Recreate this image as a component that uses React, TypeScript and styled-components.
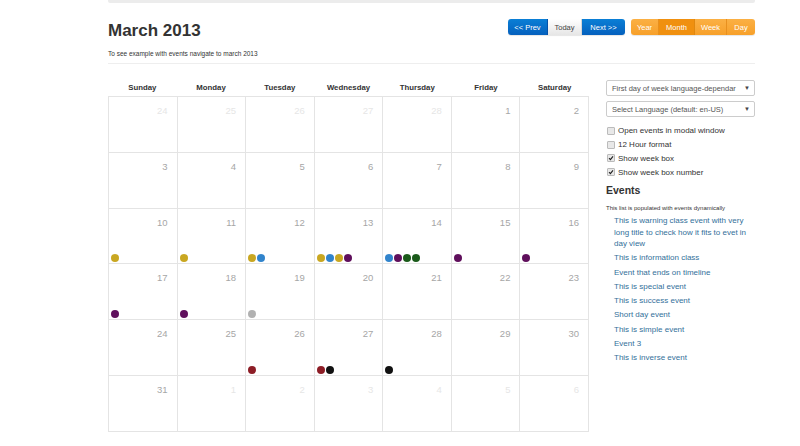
import React from 'react';
import styled, { createGlobalStyle } from 'styled-components';

const GlobalStyle = createGlobalStyle`
  html, body {
    margin: 0;
    padding: 0;
    background: #fff;
    font-family: "Liberation Sans", Arial, sans-serif;
    color: #333;
  }
`;

const Page = styled.div`
  width: 647px;
  margin-left: 108px;
`;

const TopStrip = styled.div`
  height: 3px;
  background: #ececec;
  border-radius: 0 0 2px 2px;
`;

const Header = styled.div`
  display: flex;
  justify-content: space-between;
  align-items: flex-start;
  padding-top: 16px;
  height: 44px;
  border-bottom: 1px solid #eee;
`;

const TitleBlock = styled.div`
  display: flex;
  flex-direction: column;
`;

const Title = styled.h1`
  margin: 0;
  margin-top: 2px;
  font-size: 17px;
  line-height: 20px;
  font-weight: bold;
  color: #333;
`;

const Caption = styled.p`
  margin: 9px 0 0 0;
  font-size: 6.5px;
  color: #333;
`;

const Toolbar = styled.div`
  display: flex;
  gap: 6px;
`;

const BtnGroup = styled.div`
  display: flex;
  border-radius: 3px;
  overflow: hidden;
  height: 16px;
  box-shadow: 0 1px 1px rgba(0, 0, 0, 0.1);
`;

type Tone = 'primary' | 'default' | 'warning' | 'warningActive';

const tones: Record<Tone, string> = {
  primary: 'background: linear-gradient(#0a7fd6, #0560bd); color: #fff; border-color: #0551a8;',
  default: 'background: linear-gradient(#fff, #e6e6e6); color: #444; border-color: #d6d6d6;',
  warning: 'background: linear-gradient(#fbb044, #f7a02a); color: #fff; border-color: #e8901f;',
  warningActive: 'background: #f0900f; color: #fff; border-color: #e08810;',
};

const Btn = styled.div<{ $w: number; $tone: Tone }>`
  width: ${(p) => p.$w}px;
  height: 16px;
  display: flex;
  align-items: center;
  justify-content: center;
  font-size: 7.5px;
  box-sizing: border-box;
  border-right: 1px solid;
  ${(p) => tones[p.$tone]}
  &:last-child {
    border-right: none;
  }
`;

const Body = styled.div`
  display: flex;
  gap: 17px;
  padding-top: 16px;
`;

const Calendar = styled.div`
  width: 481px;
  flex: none;
`;

const WeekHead = styled.div`
  display: grid;
  grid-template-columns: repeat(7, 1fr);
  height: 16px;
`;

const WeekDay = styled.div`
  text-align: center;
  font-size: 7.8px;
  font-weight: bold;
  color: #333;
  line-height: 16px;
`;

const Grid = styled.div`
  display: grid;
  grid-template-columns: repeat(7, 1fr);
  grid-auto-rows: 55.8px;
  border-top: 1px solid #e4e4e4;
  border-left: 1px solid #e4e4e4;
`;

const Cell = styled.div`
  border-right: 1px solid #e4e4e4;
  border-bottom: 1px solid #e4e4e4;
  display: flex;
  flex-direction: column;
  box-sizing: border-box;
  padding: 7px 9px 1px 2px;
`;

const DayNum = styled.div<{ $muted: boolean }>`
  text-align: right;
  font-size: 9.5px;
  line-height: 14px;
  color: ${(p) => (p.$muted ? '#e6e6e6' : '#a6a6a6')};
`;

const Dots = styled.div`
  margin-top: auto;
  display: flex;
  gap: 1px;
`;

const Dot = styled.span<{ $c: string }>`
  width: 8px;
  height: 8px;
  border-radius: 50%;
  background: ${(p) => p.$c};
`;

const Side = styled.div`
  width: 149px;
  flex: none;
  display: flex;
  flex-direction: column;
`;

const Select = styled.div`
  height: 16px;
  box-sizing: border-box;
  border: 1px solid #ccc;
  border-radius: 2px;
  display: flex;
  align-items: center;
  justify-content: space-between;
  padding: 0 4px 0 5px;
  font-size: 7.5px;
  color: #555;
  margin-bottom: 5px;
  white-space: nowrap;
  overflow: hidden;
`;

const Arrow = styled.span`
  font-size: 6px;
  color: #444;
`;

const CheckGroup = styled.div`
  padding-top: 2px;
`;

const CheckRow = styled.label`
  display: flex;
  align-items: center;
  gap: 3px;
  height: 13.8px;
  font-size: 8px;
  color: #333;
  padding-left: 1px;
`;

const Box = styled.span`
  width: 6px;
  height: 6px;
  border: 1px solid #bbb;
  background: #e8e8e8;
  border-radius: 1px;
  display: flex;
  align-items: center;
  justify-content: center;
`;

const EventsTitle = styled.h3`
  margin: 4px 0 0 0;
  font-size: 10.5px;
  line-height: 14px;
  font-weight: bold;
  color: #333;
`;

const EventsCaption = styled.p`
  margin: 8px 0 4px 0;
  font-size: 6px;
  color: #333;
`;

const EventList = styled.ul`
  list-style: none;
  margin: 0;
  padding: 0 0 0 8px;
`;

const EventItem = styled.li`
  font-size: 8px;
  line-height: 11.4px;
  margin-bottom: 2.9px;
  color: #33709a;
`;

const C = {
  y: '#c9a721',
  b: '#3184cc',
  p: '#5f0f5c',
  g: '#1a5a1a',
  s: '#b1b1b1',
  r: '#8d1d26',
  k: '#111',
};

const dotsByDay: Record<number, string[]> = {
  10: [C.y],
  11: [C.y],
  12: [C.y, C.b],
  13: [C.y, C.b, C.y, C.p],
  14: [C.b, C.p, C.g, C.g],
  15: [C.p],
  16: [C.p],
  17: [C.p],
  18: [C.p],
  19: [C.s],
  26: [C.r],
  27: [C.r, C.k],
  28: [C.k],
};

const weekDays = ['Sunday', 'Monday', 'Tuesday', 'Wednesday', 'Thursday', 'Friday', 'Saturday'];

const cells: { n: number; muted: boolean }[] = [
  ...[24, 25, 26, 27, 28].map((n) => ({ n, muted: true })),
  ...Array.from({ length: 31 }, (_, i) => ({ n: i + 1, muted: false })),
  ...[1, 2, 3, 4, 5, 6].map((n) => ({ n, muted: true })),
];

const events = [
  'This is warning class event with very long title to check how it fits to evet in day view',
  'This is information class',
  'Event that ends on timeline',
  'This is special event',
  'This is success event',
  'Short day event',
  'This is simple event',
  'Event 3',
  'This is inverse event',
];

const options = [
  { label: 'Open events in modal window', checked: false },
  { label: '12 Hour format', checked: false },
  { label: 'Show week box', checked: true },
  { label: 'Show week box number', checked: true },
];

function Check() {
  return (
    <svg width="6" height="6" viewBox="0 0 6 6">
      <path d="M1 3.2 L2.4 4.6 L5 1.4" fill="none" stroke="#222" strokeWidth="1.1" />
    </svg>
  );
}

export default function App() {
  return (
    <>
      <GlobalStyle />
      <Page>
        <TopStrip />
        <Header>
          <TitleBlock>
            <Title>March 2013</Title>
            <Caption>To see example with events navigate to march 2013</Caption>
          </TitleBlock>
          <Toolbar>
            <BtnGroup>
              <Btn $w={40} $tone="primary">&lt;&lt; Prev</Btn>
              <Btn $w={34} $tone="default">Today</Btn>
              <Btn $w={43} $tone="primary">Next &gt;&gt;</Btn>
            </BtnGroup>
            <BtnGroup>
              <Btn $w={28} $tone="warning">Year</Btn>
              <Btn $w={36} $tone="warningActive">Month</Btn>
              <Btn $w={32} $tone="warning">Week</Btn>
              <Btn $w={28} $tone="warning">Day</Btn>
            </BtnGroup>
          </Toolbar>
        </Header>
        <Body>
          <Calendar>
            <WeekHead>
              {weekDays.map((d) => (
                <WeekDay key={d}>{d}</WeekDay>
              ))}
            </WeekHead>
            <Grid>
              {cells.map((c, i) => (
                <Cell key={i}>
                  <DayNum $muted={c.muted}>{c.n}</DayNum>
                  <Dots>
                    {!c.muted &&
                      (dotsByDay[c.n] || []).map((col, j) => <Dot key={j} $c={col} />)}
                  </Dots>
                </Cell>
              ))}
            </Grid>
          </Calendar>
          <Side>
            <Select>
              <span>First day of week language-dependar</span>
              <Arrow>▼</Arrow>
            </Select>
            <Select>
              <span>Select Language (default: en-US)</span>
              <Arrow>▼</Arrow>
            </Select>
            <CheckGroup>
              {options.map((o) => (
                <CheckRow key={o.label}>
                  <Box>{o.checked && <Check />}</Box>
                  {o.label}
                </CheckRow>
              ))}
            </CheckGroup>
            <EventsTitle>Events</EventsTitle>
            <EventsCaption>This list is populated with events dynamically</EventsCaption>
            <EventList>
              {events.map((e) => (
                <EventItem key={e}>{e}</EventItem>
              ))}
            </EventList>
          </Side>
        </Body>
      </Page>
    </>
  );
}
